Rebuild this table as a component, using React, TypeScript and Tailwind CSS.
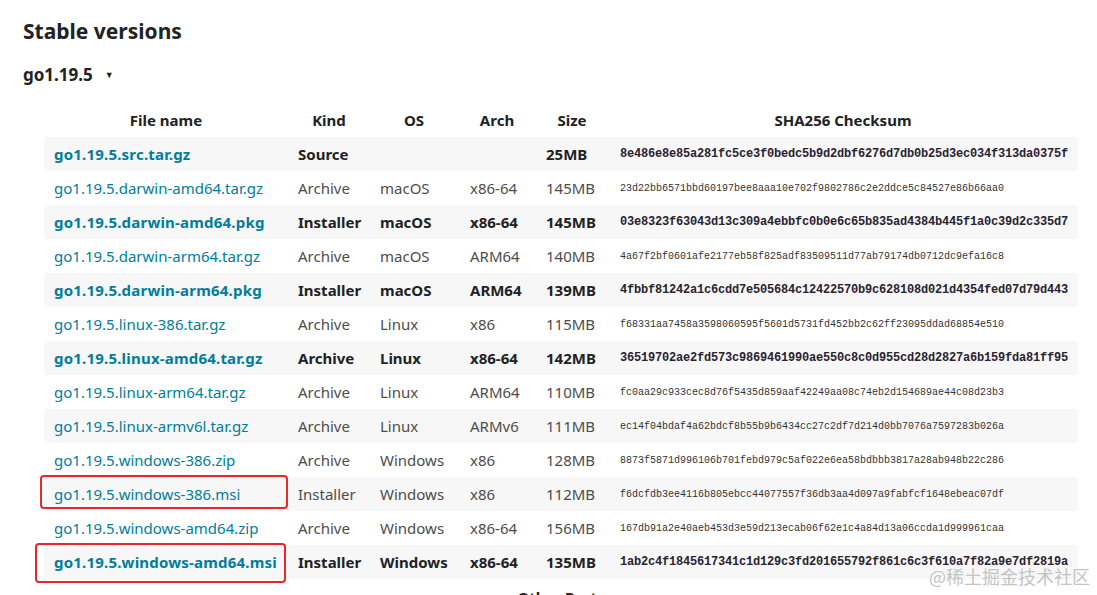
import React from "react";

type Row = {
  file: string;
  kind: string;
  os: string;
  arch: string;
  size: string;
  sha: string;
  bold?: boolean;
  box?: "small" | "big";
};

const rows: Row[] = [
  { file: "go1.19.5.src.tar.gz", kind: "Source", os: "", arch: "", size: "25MB", sha: "8e486e8e85a281fc5ce3f0bedc5b9d2dbf6276d7db0b25d3ec034f313da0375f", bold: true },
  { file: "go1.19.5.darwin-amd64.tar.gz", kind: "Archive", os: "macOS", arch: "x86-64", size: "145MB", sha: "23d22bb6571bbd60197bee8aaa10e702f9802786c2e2ddce5c84527e86b66aa0" },
  { file: "go1.19.5.darwin-amd64.pkg", kind: "Installer", os: "macOS", arch: "x86-64", size: "145MB", sha: "03e8323f63043d13c309a4ebbfc0b0e6c65b835ad4384b445f1a0c39d2c335d7", bold: true },
  { file: "go1.19.5.darwin-arm64.tar.gz", kind: "Archive", os: "macOS", arch: "ARM64", size: "140MB", sha: "4a67f2bf0601afe2177eb58f825adf83509511d77ab79174db0712dc9efa16c8" },
  { file: "go1.19.5.darwin-arm64.pkg", kind: "Installer", os: "macOS", arch: "ARM64", size: "139MB", sha: "4fbbf81242a1c6cdd7e505684c12422570b9c628108d021d4354fed07d79d443", bold: true },
  { file: "go1.19.5.linux-386.tar.gz", kind: "Archive", os: "Linux", arch: "x86", size: "115MB", sha: "f68331aa7458a3598060595f5601d5731fd452bb2c62ff23095ddad68854e510" },
  { file: "go1.19.5.linux-amd64.tar.gz", kind: "Archive", os: "Linux", arch: "x86-64", size: "142MB", sha: "36519702ae2fd573c9869461990ae550c8c0d955cd28d2827a6b159fda81ff95", bold: true },
  { file: "go1.19.5.linux-arm64.tar.gz", kind: "Archive", os: "Linux", arch: "ARM64", size: "110MB", sha: "fc0aa29c933cec8d76f5435d859aaf42249aa08c74eb2d154689ae44c08d23b3" },
  { file: "go1.19.5.linux-armv6l.tar.gz", kind: "Archive", os: "Linux", arch: "ARMv6", size: "111MB", sha: "ec14f04bdaf4a62bdcf8b55b9b6434cc27c2df7d214d0bb7076a7597283b026a" },
  { file: "go1.19.5.windows-386.zip", kind: "Archive", os: "Windows", arch: "x86", size: "128MB", sha: "8873f5871d996106b701febd979c5af022e6ea58bdbbb3817a28ab948b22c286" },
  { file: "go1.19.5.windows-386.msi", kind: "Installer", os: "Windows", arch: "x86", size: "112MB", sha: "f6dcfdb3ee4116b805ebcc44077557f36db3aa4d097a9fabfcf1648ebeac07df", box: "small" },
  { file: "go1.19.5.windows-amd64.zip", kind: "Archive", os: "Windows", arch: "x86-64", size: "156MB", sha: "167db91a2e40aeb453d3e59d213ecab06f62e1c4a84d13a06ccda1d999961caa" },
  { file: "go1.19.5.windows-amd64.msi", kind: "Installer", os: "Windows", arch: "x86-64", size: "135MB", sha: "1ab2c4f1845617341c1d129c3fd201655792f861c6c3f610a7f82a9e7df2819a", bold: true, box: "big" },
];

const cols = "grid grid-cols-[244px_82px_88px_78px_72px_470px]";

export default function App() {
  return (
    <div className="relative h-[595px] overflow-hidden bg-white pl-[23px] font-['Noto_Sans',sans-serif] text-[#202224]">
      <h2 className="mt-[14px] h-[34px] text-[21px] leading-[34px] font-bold">Stable versions</h2>

      <div className="mt-[15px] flex h-[24px] items-center gap-[12px] text-[17px] font-bold">
        <span>go1.19.5</span>
        <span className="text-[9px]">▼</span>
      </div>

      <div className="mt-[16px] ml-[21px] w-[1034px]">
        {/* header */}
        <div className={`${cols} h-[34px] items-center text-center text-[15px] font-bold`}>
          <div>File name</div>
          <div>Kind</div>
          <div>OS</div>
          <div>Arch</div>
          <div>Size</div>
          <div>SHA256 Checksum</div>
        </div>

        {rows.map((r, i) => (
          <div
            key={r.file}
            className={`${cols} h-[34px] items-center rounded-[3px] text-[15px] ${i % 2 === 0 ? "bg-[#f7f7f7]" : "bg-white"} ${r.bold ? "font-bold text-[#202224]" : "text-[#4d4d4d]"}`}
          >
            <div className={`relative pl-[10px] text-[#007d9c] whitespace-nowrap ${r.bold ? "tracking-[0.2px]" : ""}`}>
              {r.file}
              {r.box === "small" && (
                <div className="absolute -top-[8px] -left-[4px] h-[34px] w-[248px] rounded-[4px] border-2 border-[#e8262b]" />
              )}
              {r.box === "big" && (
                <div className="absolute -top-[8px] -left-[9px] h-[40px] w-[251px] rounded-[4px] border-2 border-[#e8262b]" />
              )}
            </div>
            <div className="pl-[10px]">{r.kind}</div>
            <div className="pl-[10px]">{r.os}</div>
            <div className="pl-[12px]">{r.arch}</div>
            <div className="pl-[10px]">{r.size}</div>
            <div
              className={`pl-[12px] whitespace-nowrap font-['Liberation_Mono',monospace] ${r.bold ? "text-[12px] tracking-[-0.2px] text-[#2a2230]" : "text-[10px] text-[#333]"}`}
            >
              {r.sha}
            </div>
          </div>
        ))}

        <div className="mt-[7px] text-center text-[15px] font-bold">Other Ports</div>
      </div>

      <div className="absolute right-[7px] bottom-[5px] text-[18px] text-[#c4c4c4] font-['Noto_Sans_CJK_SC',sans-serif]">
        @稀土掘金技术社区
      </div>
    </div>
  );
}
